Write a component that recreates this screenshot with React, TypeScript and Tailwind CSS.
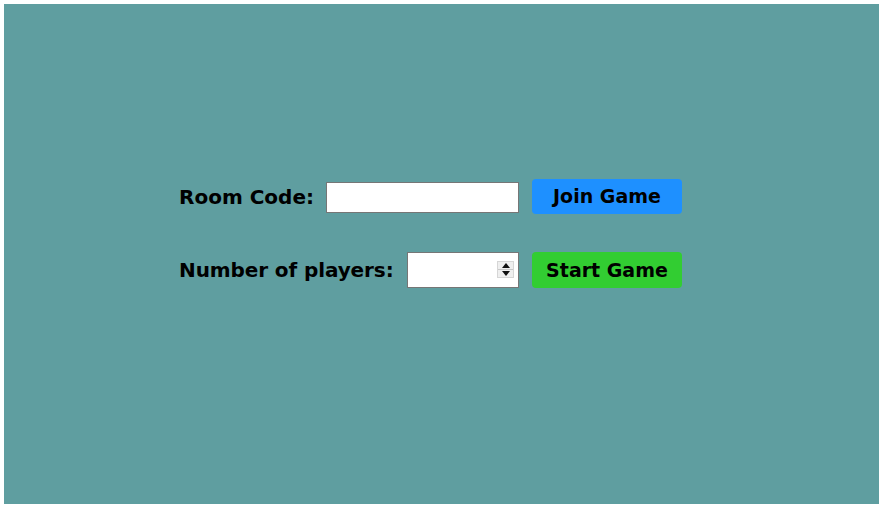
import React from 'react';

const App: React.FC = () => {
  return (
    <div className="w-[885px] h-[508px] bg-white p-[4px]" style={{ fontFamily: '"DejaVu Sans", Verdana, sans-serif' }}>
      <div className="w-[875px] h-[500px] bg-[#5f9ea0] pt-[175px] pl-[175px]">
        <div className="flex flex-col w-[503px] gap-[38px]">
          {/* Join row */}
          <div className="flex items-center h-[35px]">
            <label className="text-[20px] font-bold text-black">Room Code:</label>
            <input
              type="text"
              className="ml-auto mt-[2px] w-[193px] h-[31px] bg-white border border-[#767676] outline-none px-1"
            />
            <button className="ml-[13px] w-[150px] h-[35px] rounded-[4px] bg-[#1e90ff] text-[19px] font-bold text-black">
              Join Game
            </button>
          </div>

          {/* Start row */}
          <div className="flex items-center h-[36px]">
            <label className="text-[20px] font-bold text-black tracking-[-0.1px]">Number of players:</label>
            <div className="relative ml-auto w-[112px] h-[36px]">
              <input
                type="text"
                className="w-full h-full bg-white border border-[#767676] outline-none px-1"
              />
              <div className="absolute left-[90px] top-[9px] w-[17px] h-[17px] bg-[#efefef] border border-[#d6d6d6] flex flex-col">
                <div className="flex-1 flex items-center justify-center border-b border-[#c8c8c8]">
                  <svg width="8" height="5" viewBox="0 0 8 5"><path d="M0 5 L4 0 L8 5 Z" fill="#111" /></svg>
                </div>
                <div className="flex-1 flex items-center justify-center">
                  <svg width="8" height="5" viewBox="0 0 8 5"><path d="M0 0 L4 5 L8 0 Z" fill="#111" /></svg>
                </div>
              </div>
            </div>
            <button className="ml-[13px] w-[150px] h-[36px] rounded-[4px] bg-[#32cd32] text-[19px] font-bold text-black">
              Start Game
            </button>
          </div>
        </div>
      </div>
    </div>
  );
};

export default App;
